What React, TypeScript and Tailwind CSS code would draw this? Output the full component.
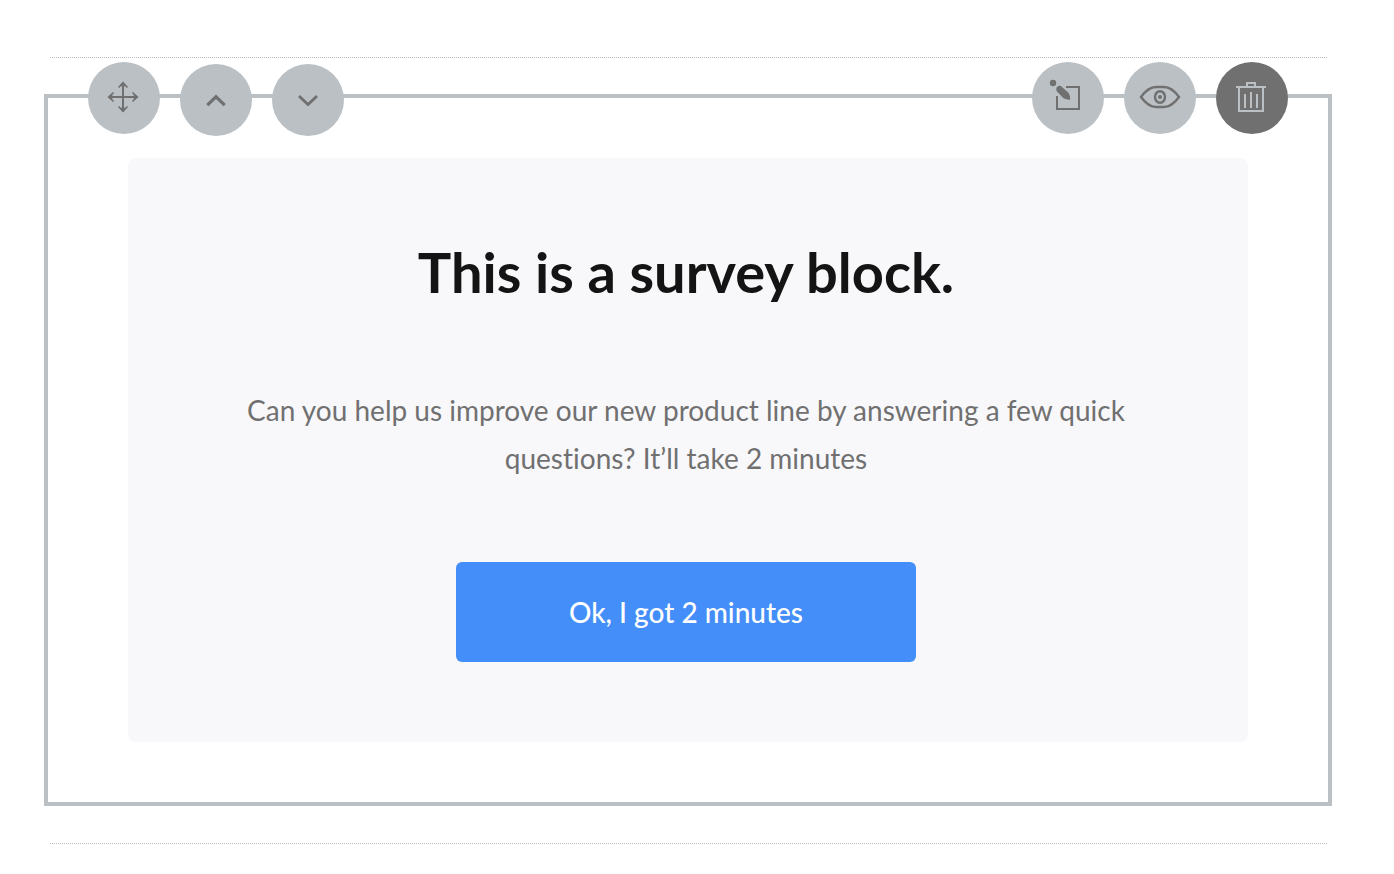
import type { ReactNode } from "react";

type ToolButtonProps = {
  label: string;
  tone?: "light" | "dark";
  children: ReactNode;
};

function ToolButton({ label, tone = "light", children }: ToolButtonProps) {
  const colors =
    tone === "dark" ? "bg-[#707070] text-[#bac0c4]" : "bg-[#bac0c4] text-[#707070]";
  return (
    <button
      type="button"
      aria-label={label}
      className={`size-18 shrink-0 cursor-pointer rounded-full ${colors}`}
    >
      <svg viewBox="0 0 72 72" className="size-full" fill="none" stroke="currentColor" strokeWidth="2" aria-hidden="true">
        {children}
      </svg>
    </button>
  );
}

function Toolbar() {
  return (
    <div className="absolute inset-x-10 -top-9 flex items-start justify-between">
      <div className="flex gap-5">
        <ToolButton label="Move block">
          <path d="M35 21V49M21 35H49" />
          <path
            d="M30.500 25.500L35 21L39.500 25.500M30.500 44.500L35 49L39.500 44.500M25.500 30.500L21 35L25.500 39.500M44.500 30.500L49 35L44.500 39.500"
            strokeWidth="1.600"
          />
          <path
            d="M35 19.500L37.800 23L35 26L32.200 23ZM35 50.500L37.800 47L35 44L32.200 47ZM19.500 35L23 32.200L26 35L23 37.800ZM50.500 35L47 32.200L44 35L47 37.800Z"
            fill="currentColor"
            stroke="none"
          />
        </ToolButton>
        <div className="flex gap-5 pt-0.5">
          <ToolButton label="Move up">
            <path d="M27.3 41.2L36 32.8L44.7 41.2" strokeWidth="3.2" />
          </ToolButton>
          <ToolButton label="Move down">
            <path d="M27 32L36 40.5L45 32" strokeWidth="2.8" />
          </ToolButton>
        </div>
      </div>
      <div className="flex gap-5">
        <ToolButton label="Edit block">
          <path d="M34 25H47V47H25V34" />
          <circle cx="21" cy="21" r="3.2" fill="currentColor" stroke="none" />
          <path
            d="M24.300 26Q25.500 23.300 28.500 23.700L36.500 30.700Q38.500 33.500 38.200 37.700Q34.500 38 31.500 36.300L24.500 29Z"
            fill="currentColor"
            stroke="none"
          />
        </ToolButton>
        <ToolButton label="Preview block">
          <path d="M17 35C21 29.5 26.5 25 32 25H40C45.5 25 51 29.5 55 35C51 40.5 45.5 45 40 45H32C26.5 45 21 40.5 17 35Z" strokeWidth="2.4" />
          <ellipse cx="36" cy="35" rx="5" ry="5.8" strokeWidth="2.4" />
          <circle cx="36" cy="35" r="2" fill="currentColor" stroke="none" />
        </ToolButton>
        <ToolButton label="Delete block" tone="dark">
          <path d="M20 25H50M31 25V21H39V25M23 25V49H47V25M29 32V46M35 30V46M41 32V46" />
        </ToolButton>
      </div>
    </div>
  );
}

function Divider() {
  return <hr className="mr-[5px] ml-1.5 border-t border-dotted border-[#b8bcc2]" />;
}

export default function App() {
  return (
    <main className="bg-white pt-[57px] pr-[62px] pb-7 pl-11 font-['Lato',sans-serif] [font-variant-ligatures:no-common-ligatures]">
      <Divider />
      <section className="relative mt-9 mb-[37px] border-4 border-[#bac0c4] px-20 py-15">
        <Toolbar />
        <div className="flex flex-col items-center gap-20 rounded-lg bg-[#f8f8fb] py-20 pr-21 pl-20 text-center">
          <h1 className="text-[56px] leading-[68px] font-bold text-[#141414]">This is a survey block.</h1>
          <p className="max-w-[880px] text-[28px] leading-[48px] text-[#707070]">
            Can you help us improve our new product line by answering a few quick questions? It’ll take 2 minutes
          </p>
          <button
            type="button"
            className="h-25 w-[460px] max-w-full cursor-pointer rounded-md bg-[#448ef9] text-[28px] leading-[48px] font-medium text-white"
          >
            Ok, I got 2 minutes
          </button>
        </div>
      </section>
      <Divider />
    </main>
  );
}
